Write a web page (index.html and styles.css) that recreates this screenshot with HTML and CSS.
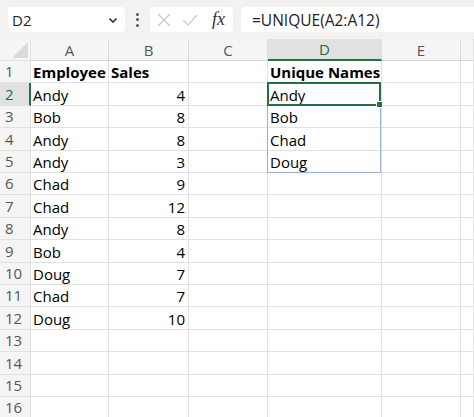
FILE: index.html
```html
<!DOCTYPE html>
<html>
<head>
<meta charset="utf-8">
<link rel="stylesheet" href="styles.css">
</head>
<body>
<div class="app">
  <div class="toolbar">
    <div class="namebox">
      <span class="name">D2</span>
      <svg class="chev" width="10" height="7" viewBox="0 0 10 7"><path d="M1.5 1.5 L5 5 L8.5 1.5" fill="none" stroke="#333" stroke-width="1.6"/></svg>
    </div>
    <div class="dots"><span></span><span></span><span></span></div>
    <div class="fxbox">
      <svg width="14" height="14" viewBox="0 0 14 14"><path d="M1 1 L13 13 M13 1 L1 13" stroke="#c8c8c8" stroke-width="1.2"/></svg>
      <svg width="16" height="12" viewBox="0 0 16 12"><path d="M1 6 L6 11 L15 1" fill="none" stroke="#c8c8c8" stroke-width="1.2"/></svg>
      <span class="fx">fx</span>
    </div>
    <div class="formula">=UNIQUE(A2:A12)</div>
  </div>
  <div class="sheet">
    <div class="corner"><span class="tri"></span></div>
    <div class="ch">A</div><div class="ch">B</div><div class="ch">C</div><div class="ch chsel">D</div><div class="ch">E</div><div class="ch"></div>

    <div class="rh">1</div><div class="c b">Employee</div><div class="c b">Sales</div><div class="c"></div><div class="c b">Unique Names</div><div class="c"></div><div class="c"></div>
    <div class="rh rhsel">2</div><div class="c">Andy</div><div class="c n">4</div><div class="c"></div><div class="c active">Andy<span class="spill"></span><span class="selbox"><span class="handle"></span></span></div><div class="c"></div><div class="c"></div>
    <div class="rh">3</div><div class="c">Bob</div><div class="c n">8</div><div class="c"></div><div class="c">Bob</div><div class="c"></div><div class="c"></div>
    <div class="rh">4</div><div class="c">Andy</div><div class="c n">8</div><div class="c"></div><div class="c">Chad</div><div class="c"></div><div class="c"></div>
    <div class="rh">5</div><div class="c">Andy</div><div class="c n">3</div><div class="c"></div><div class="c">Doug</div><div class="c"></div><div class="c"></div>
    <div class="rh">6</div><div class="c">Chad</div><div class="c n">9</div><div class="c"></div><div class="c"></div><div class="c"></div><div class="c"></div>
    <div class="rh">7</div><div class="c">Chad</div><div class="c n">12</div><div class="c"></div><div class="c"></div><div class="c"></div><div class="c"></div>
    <div class="rh">8</div><div class="c">Andy</div><div class="c n">8</div><div class="c"></div><div class="c"></div><div class="c"></div><div class="c"></div>
    <div class="rh">9</div><div class="c">Bob</div><div class="c n">4</div><div class="c"></div><div class="c"></div><div class="c"></div><div class="c"></div>
    <div class="rh">10</div><div class="c">Doug</div><div class="c n">7</div><div class="c"></div><div class="c"></div><div class="c"></div><div class="c"></div>
    <div class="rh">11</div><div class="c">Chad</div><div class="c n">7</div><div class="c"></div><div class="c"></div><div class="c"></div><div class="c"></div>
    <div class="rh">12</div><div class="c">Doug</div><div class="c n">10</div><div class="c"></div><div class="c"></div><div class="c"></div><div class="c"></div>
    <div class="rh">13</div><div class="c"></div><div class="c"></div><div class="c"></div><div class="c"></div><div class="c"></div><div class="c"></div>
    <div class="rh">14</div><div class="c"></div><div class="c"></div><div class="c"></div><div class="c"></div><div class="c"></div><div class="c"></div>
    <div class="rh">15</div><div class="c"></div><div class="c"></div><div class="c"></div><div class="c"></div><div class="c"></div><div class="c"></div>
    <div class="rh">16</div><div class="c"></div><div class="c"></div><div class="c"></div><div class="c"></div><div class="c"></div><div class="c"></div>
  </div>
</div>
</body>
</html>
```
FILE: styles.css
```css
html, body {
  margin: 0;
  padding: 0;
  background: #ffffff;
}
.app {
  width: 474px;
  height: 417px;
  overflow: hidden;
  font-family: "Open Sans", "Noto Sans", sans-serif;
}
.toolbar {
  height: 39px;
  box-sizing: border-box;
  background: #f3f2f1;
  display: flex;
  align-items: center;
  padding: 0 0 0 8px;
}
.namebox {
  width: 117px;
  height: 25px;
  background: #fff;
  border-radius: 4px;
  display: flex;
  align-items: center;
  justify-content: space-between;
  padding: 0 7px 0 4px;
  box-sizing: border-box;
  font-size: 15px;
  color: #222;
}
.chev { margin-top: 1px; }
.dots {
  width: 25px;
  display: flex;
  flex-direction: column;
  align-items: center;
  gap: 2.5px;
}
.dots span {
  width: 3px;
  height: 3px;
  border-radius: 50%;
  background: #555;
}
.fxbox {
  width: 83px;
  height: 25px;
  background: #fff;
  border-radius: 4px;
  display: flex;
  align-items: center;
  gap: 11px;
  padding-left: 7px;
  box-sizing: border-box;
}
.fx {
  font-family: "Liberation Serif", serif;
  font-style: italic;
  font-size: 18px;
  color: #333;
  margin-left: 3px;
}
.formula {
  margin-left: 8px;
  flex: 1;
  height: 25px;
  background: #fff;
  border-radius: 4px 0 0 4px;
  display: flex;
  align-items: center;
  padding-left: 11px;
  font-size: 15.5px;
  color: #222;
}
.sheet {
  display: grid;
  grid-template-columns: 31px 78px 80px 79px 114px 79px 1fr;
  grid-template-rows: 22px 22px 23px 22px 23px 22px 22px 23px 22px 23px 22px 22px 23px 22px 23px 22px 22px;
}
.sheet > div {
  box-sizing: border-box;
  border-right: 1px solid #e1e1e1;
  border-bottom: 1px solid #e1e1e1;
}
.corner {
  background: #f5f5f5;
  display: flex;
  align-items: flex-end;
  justify-content: flex-end;
  padding: 0 2px 2px 0;
}
.tri {
  width: 0;
  height: 0;
  border-left: 16px solid transparent;
  border-bottom: 16px solid #dadada;
}
.ch {
  background: #f5f5f5;
  color: #555;
  font-size: 15px;
  display: flex;
  align-items: center;
  justify-content: center;
}
.sheet > .ch { border-right-color: #dcdcdc; border-bottom-color: #d4d4d4; }
.sheet > .chsel {
  background: #e1e1e1;
  color: #1e6b42;
  border-bottom: 2px solid #217346;
}
.rh {
  background: #f5f5f5;
  color: #555;
  font-size: 15px;
  display: flex;
  align-items: flex-end;
  padding: 0 0 1px 5px;
}
.sheet > .rhsel {
  background: #e1e1e1;
  color: #1e6b42;
  border-right: 2px solid #217346;
}
.c {
  font-family: "Open Sans", sans-serif;
  font-size: 15px;
  color: #000;
  display: flex;
  align-items: flex-end;
  padding: 0 3px 0 2px;
  line-height: 20px;
  white-space: nowrap;
}
.c.b { font-weight: bold; }
.c.n { justify-content: flex-end; }
.active { position: relative; }
.spill {
  position: absolute;
  left: -1px;
  top: -1px;
  width: 114px;
  height: 91px;
  border: 1px solid #9aaedb;
  box-sizing: border-box;
}
.selbox {
  position: absolute;
  left: -1px;
  top: -1px;
  width: 114px;
  height: 24px;
  border: 2px solid #217346;
  box-sizing: border-box;
}
.handle {
  position: absolute;
  right: -4px;
  bottom: -4px;
  width: 5px;
  height: 5px;
  background: #217346;
  border: 1px solid #fff;
}
```
